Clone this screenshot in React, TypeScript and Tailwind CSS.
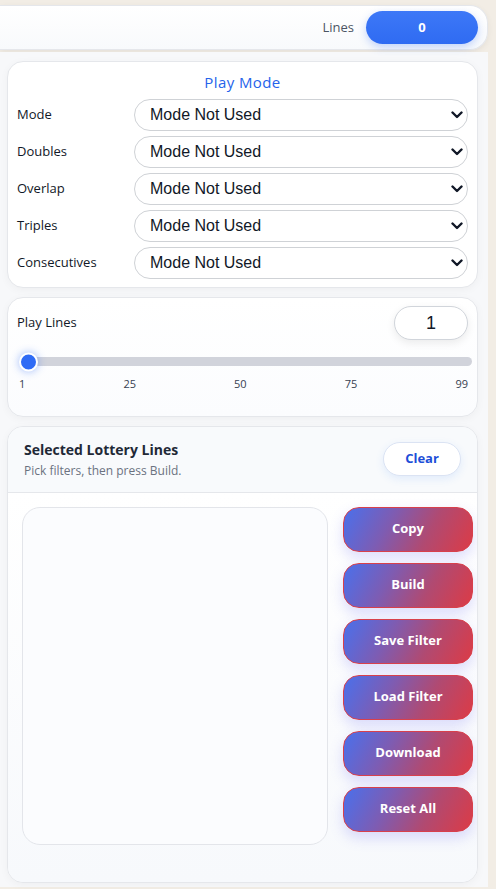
import { useState } from "react";

const modeRows = ["Mode", "Doubles", "Overlap", "Triples", "Consecutives"];
const actions = ["Copy", "Build", "Save Filter", "Load Filter", "Download", "Reset All"];
const ticks = ["1", "25", "50", "75", "99"];

function Chevron() {
  return (
    <svg
      width="12"
      height="8"
      viewBox="0 0 12 8"
      className="pointer-events-none absolute right-[5px] top-1/2 -translate-y-1/2"
    >
      <path d="M1.5 1.5 L6 6 L10.5 1.5" fill="none" stroke="#111827" strokeWidth="2.4" strokeLinecap="round" strokeLinejoin="round" />
    </svg>
  );
}

export default function App() {
  const [lines, setLines] = useState(1);

  return (
    <div className="min-h-screen bg-[#f2ede5] font-['Open_Sans',sans-serif] text-[#111827]">
      <div className="w-[488px]">
        {/* top bar */}
        <div className="pt-[5px]">
          <div className="flex h-[45px] items-center justify-end rounded-r-[18px] border border-l-0 border-[#e5e7eb] bg-gradient-to-b from-white to-[#f8fafc] pr-[9px] shadow-[0_2px_6px_rgba(0,0,0,0.06)]">
            <span className="mr-[12px] text-[13px] text-[#4b5563]">Lines</span>
            <div className="flex h-[33px] w-[112px] items-center justify-center rounded-full bg-gradient-to-b from-[#3d78f7] to-[#2f6bf2] text-[13px] font-bold text-white shadow-[0_3px_8px_rgba(59,116,246,0.3)]">
              0
            </div>
          </div>
        </div>

        <div className="mt-[2px] flex flex-col gap-[9px] bg-[#f7f8fa] pb-[4px] pl-[7px] pr-[10px] pt-[9px]">
          {/* play mode */}
          <div className="rounded-[16px] border border-[#e5e7eb] bg-white px-[9px] pb-[8px] pt-[10px] shadow-[0_2px_8px_rgba(0,0,0,0.04)]">
            <div className="text-center text-[15px] leading-[20px] tracking-[0.4px] text-[#2563eb]">Play Mode</div>
            <div className="mt-[7px] flex flex-col gap-[5px]">
              {modeRows.map((label) => (
                <div key={label} className="flex items-center">
                  <span className="w-[117px] text-[13px] text-[#111827]">{label}</span>
                  <div className="relative flex-1">
                    <select className="h-[32px] w-full appearance-none rounded-full border border-[#cfd2d6] bg-white pl-[15px] font-['Liberation_Sans',sans-serif] text-[16px] text-[#111827] outline-none">
                      <option>Mode Not Used</option>
                    </select>
                    <Chevron />
                  </div>
                </div>
              ))}
            </div>
          </div>

          {/* play lines */}
          <div className="rounded-[16px] border border-[#e5e7eb] bg-gradient-to-b from-white to-[#fbfcfe] px-[9px] pb-[23px] pt-[8px] shadow-[0_2px_8px_rgba(0,0,0,0.04)]">
            <div className="flex items-center justify-between">
              <span className="text-[13px]">Play Lines</span>
              <div className="flex h-[34px] w-[74px] items-center justify-center rounded-full border border-[#d1d5db] bg-white font-['Liberation_Sans',sans-serif] text-[18px] shadow-[0_3px_8px_rgba(0,0,0,0.08)]">
                {lines}
              </div>
            </div>
            <div className="relative ml-[4px] mr-[-4px] mt-[17px] h-[9px] rounded-full bg-[#d1d3db]">
              <div
                className="absolute top-1/2 h-[19px] w-[19px] -translate-y-1/2 rounded-full border-2 border-white bg-[#2f6bf5] shadow-[0_0_8px_rgba(47,107,245,0.45)]"
                style={{ left: `${((lines - 1) / 98) * 100}%`, marginLeft: -2 }}
                onClick={() => setLines(lines)}
              />
            </div>
            <div className="mt-[10px] flex justify-between pl-[2px] pr-[0px] text-[11px] text-[#374151]">
              {ticks.map((t) => (
                <span key={t}>{t}</span>
              ))}
            </div>
          </div>

          {/* selected lines */}
          <div className="overflow-hidden rounded-[16px] border border-[#e5e7eb] bg-[#fafbfd] shadow-[0_2px_8px_rgba(0,0,0,0.04)]">
            <div className="flex items-center justify-between border-b border-[#e5e7eb] bg-[#f8fafc] pb-[13px] pl-[16px] pr-[16px] pt-[13px]">
              <div>
                <div className="text-[14px] font-bold leading-[20px] text-[#1f2937]">Selected Lottery Lines</div>
                <div className="mt-[3px] text-[12px] leading-[16px] text-[#6b7280]">Pick filters, then press Build.</div>
              </div>
              <button className="h-[34px] w-[78px] rounded-full border border-[#dbe3f3] bg-white text-[13px] font-bold text-[#1d4ed8] shadow-[0_3px_8px_rgba(59,130,246,0.12)]">
                Clear
              </button>
            </div>
            <div className="flex gap-[15px] bg-gradient-to-b from-white to-[#f7f9fc] pb-[37px] pl-[14px] pr-[4px] pt-[14px]">
              <div className="h-[338px] w-[306px] rounded-[18px] border border-[#e3e5ea] bg-[#fbfcfe]" />
              <div className="flex flex-col gap-[11px]">
                {actions.map((a) => (
                  <button
                    key={a}
                    className="h-[45px] w-[130px] rounded-[16px] border border-[#d8404c] bg-[linear-gradient(118deg,#4a70ec_0%,#7e5cb2_35%,#b04a72_65%,#dc3b46_100%)] text-[13px] font-bold text-white shadow-[0_6px_14px_rgba(99,102,241,0.22)]"
                  >
                    {a}
                  </button>
                ))}
              </div>
            </div>
          </div>
        </div>
      </div>
    </div>
  );
}
